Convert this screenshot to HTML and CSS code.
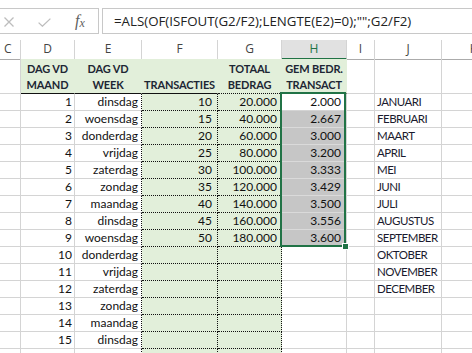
FILE: index.html
```html
<!DOCTYPE html>
<html>
<head>
    <title>Transacties per dag</title>
    <link rel="stylesheet" href="styles.css">
</head>
<body>
    <div class="formula-bar">
        <div class="fb-tools">
            <svg class="fb-cancel" width="10" height="10" viewBox="0 0 10 10">
                <path d="M0.5 0.5 L9.5 9.5 M9.5 0.5 L0.5 9.5" stroke="#bdbdbd" stroke-width="1.3" fill="none"/>
            </svg>
            <svg class="fb-enter" width="13" height="9" viewBox="0 0 13 9">
                <path d="M0.6 4.6 L4.4 8.2 L12.4 0.6" stroke="#bdbdbd" stroke-width="1.3" fill="none"/>
            </svg>
            <span class="fb-fx">f<span class="fx-x">x</span></span>
        </div>
        <div class="fb-input">=ALS(OF(ISFOUT(G2/F2);LENGTE(E2)=0);"";G2/F2)</div>
    </div>

    <div class="sheet">
        <div class="col-heads">
            <div class="col-head col-c">C</div>
            <div class="col-head">D</div>
            <div class="col-head">E</div>
            <div class="col-head">F</div>
            <div class="col-head">G</div>
            <div class="col-head selected">H</div>
            <div class="col-head">I</div>
            <div class="col-head">J</div>
            <div class="col-head">K</div>
        </div>

        <div class="row head-row">
            <div class="cell"></div>
            <div class="cell hd">DAG VD<br>MAAND</div>
            <div class="cell hd">DAG VD<br>WEEK</div>
            <div class="cell hd">TRANSACTIES</div>
            <div class="cell hd hd-dot">TOTAAL<br>BEDRAG</div>
            <div class="cell hd">GEM BEDR.<br>TRANSACT</div>
            <div class="cell"></div>
            <div class="cell"></div>
            <div class="cell"></div>
        </div>

        <div class="row">
            <div class="cell"></div><div class="cell day-nr">1</div><div class="cell weekday">dinsdag</div>
            <div class="cell count">10</div><div class="cell amount">20.000</div><div class="cell avg active">2.000</div>
            <div class="cell"></div><div class="cell month">JANUARI</div><div class="cell"></div>
        </div>
        <div class="row">
            <div class="cell"></div><div class="cell day-nr">2</div><div class="cell weekday">woensdag</div>
            <div class="cell count">15</div><div class="cell amount">40.000</div><div class="cell avg picked">2.667</div>
            <div class="cell"></div><div class="cell month">FEBRUARI</div><div class="cell"></div>
        </div>
        <div class="row">
            <div class="cell"></div><div class="cell day-nr">3</div><div class="cell weekday">donderdag</div>
            <div class="cell count">20</div><div class="cell amount">60.000</div><div class="cell avg picked">3.000</div>
            <div class="cell"></div><div class="cell month">MAART</div><div class="cell"></div>
        </div>
        <div class="row">
            <div class="cell"></div><div class="cell day-nr">4</div><div class="cell weekday">vrijdag</div>
            <div class="cell count">25</div><div class="cell amount">80.000</div><div class="cell avg picked">3.200</div>
            <div class="cell"></div><div class="cell month">APRIL</div><div class="cell"></div>
        </div>
        <div class="row">
            <div class="cell"></div><div class="cell day-nr">5</div><div class="cell weekday">zaterdag</div>
            <div class="cell count">30</div><div class="cell amount">100.000</div><div class="cell avg picked">3.333</div>
            <div class="cell"></div><div class="cell month">MEI</div><div class="cell"></div>
        </div>
        <div class="row">
            <div class="cell"></div><div class="cell day-nr">6</div><div class="cell weekday">zondag</div>
            <div class="cell count">35</div><div class="cell amount">120.000</div><div class="cell avg picked">3.429</div>
            <div class="cell"></div><div class="cell month">JUNI</div><div class="cell"></div>
        </div>
        <div class="row">
            <div class="cell"></div><div class="cell day-nr">7</div><div class="cell weekday">maandag</div>
            <div class="cell count">40</div><div class="cell amount">140.000</div><div class="cell avg picked">3.500</div>
            <div class="cell"></div><div class="cell month">JULI</div><div class="cell"></div>
        </div>
        <div class="row">
            <div class="cell"></div><div class="cell day-nr">8</div><div class="cell weekday">dinsdag</div>
            <div class="cell count">45</div><div class="cell amount">160.000</div><div class="cell avg picked">3.556</div>
            <div class="cell"></div><div class="cell month">AUGUSTUS</div><div class="cell"></div>
        </div>
        <div class="row">
            <div class="cell"></div><div class="cell day-nr">9</div><div class="cell weekday">woensdag</div>
            <div class="cell count">50</div><div class="cell amount">180.000</div><div class="cell avg picked">3.600</div>
            <div class="cell"></div><div class="cell month">SEPTEMBER</div><div class="cell"></div>
        </div>
        <div class="row">
            <div class="cell"></div><div class="cell day-nr">10</div><div class="cell weekday">donderdag</div>
            <div class="cell count"></div><div class="cell amount"></div><div class="cell avg"></div>
            <div class="cell"></div><div class="cell month">OKTOBER</div><div class="cell"></div>
        </div>
        <div class="row">
            <div class="cell"></div><div class="cell day-nr">11</div><div class="cell weekday">vrijdag</div>
            <div class="cell count"></div><div class="cell amount"></div><div class="cell avg"></div>
            <div class="cell"></div><div class="cell month">NOVEMBER</div><div class="cell"></div>
        </div>
        <div class="row">
            <div class="cell"></div><div class="cell day-nr">12</div><div class="cell weekday">zaterdag</div>
            <div class="cell count"></div><div class="cell amount"></div><div class="cell avg"></div>
            <div class="cell"></div><div class="cell month">DECEMBER</div><div class="cell"></div>
        </div>
        <div class="row">
            <div class="cell"></div><div class="cell day-nr">13</div><div class="cell weekday">zondag</div>
            <div class="cell count"></div><div class="cell amount"></div><div class="cell avg"></div>
            <div class="cell"></div><div class="cell month"></div><div class="cell"></div>
        </div>
        <div class="row">
            <div class="cell"></div><div class="cell day-nr">14</div><div class="cell weekday">maandag</div>
            <div class="cell count"></div><div class="cell amount"></div><div class="cell avg"></div>
            <div class="cell"></div><div class="cell month"></div><div class="cell"></div>
        </div>
        <div class="row">
            <div class="cell"></div><div class="cell day-nr">15</div><div class="cell weekday">dinsdag</div>
            <div class="cell count"></div><div class="cell amount"></div><div class="cell avg"></div>
            <div class="cell"></div><div class="cell month"></div><div class="cell"></div>
        </div>
        <div class="row">
            <div class="cell"></div><div class="cell day-nr"></div><div class="cell weekday"></div>
            <div class="cell count"></div><div class="cell amount"></div><div class="cell avg"></div>
            <div class="cell"></div><div class="cell month"></div><div class="cell"></div>
        </div>

        <div class="selection"><div class="fill-handle"></div></div>
    </div>
</body>
</html>
```

FILE: styles.css
```css
body {
    margin: 0;
    padding: 0;
    width: 472px;
    height: 353px;
    overflow: hidden;
    background-color: white;
    font-family: Lato, "Open Sans", sans-serif;
    color: #111;
}
.formula-bar {
    display: flex;
    gap: 3px;
    margin-top: 8px;
    height: 26px;
}
.fb-tools {
    display: flex;
    align-items: center;
    width: 99px;
    box-sizing: border-box;
    border: 1px solid #c8c8c8;
    border-left: none;
}
.fb-cancel {
    margin-left: 4px;
    margin-top: 1px;
}
.fb-enter {
    margin-left: 24px;
    margin-top: 2px;
}
.fb-fx {
    margin-left: 24px;
    font-family: "Liberation Serif", serif;
    font-style: italic;
    font-size: 16px;
    color: #606060;
}
.fx-x {
    font-size: 12px;
    position: relative;
    top: 1px;
}
.fb-input {
    flex: 1;
    box-sizing: border-box;
    border: 1px solid #c8c8c8;
    border-right: none;
    padding-left: 11px;
    line-height: 24px;
    font-family: "Open Sans", sans-serif;
    font-size: 13.3px;
    color: #222;
    white-space: nowrap;
}
.sheet {
    position: relative;
    margin-top: 6px;
}
.col-heads,
.row {
    display: grid;
    grid-template-columns: 21px 54px 67px 76px 64px 65px 28px 67px 64px;
}
.col-heads {
    height: 19px;
}
.col-head {
    box-sizing: border-box;
    border-right: 1px solid #d4d4d4;
    border-bottom: 1px solid #ababab;
    text-align: center;
    font-family: "Open Sans", sans-serif;
    font-size: 12px;
    line-height: 18px;
    color: #444;
}
.col-head.col-c {
    text-align: left;
    padding-left: 4px;
}
.col-head.selected {
    background-color: #e1e1e1;
    color: #217346;
    border-bottom: 2px solid #217346;
}
.row {
    height: 17px;
}
.cell {
    box-sizing: border-box;
    border-right: 1px solid #d4d4d4;
    border-bottom: 1px solid #d4d4d4;
    padding: 0 2px;
    font-size: 12px;
    line-height: 16px;
    white-space: nowrap;
    overflow: hidden;
}
.head-row {
    height: 35px;
}
.hd {
    display: flex;
    flex-direction: column;
    justify-content: flex-end;
    align-items: center;
    text-align: center;
    background-color: #e2efda;
    border-right-color: #e2efda;
    border-bottom: 1px solid #111;
    font-weight: bold;
    font-size: 11px;
    letter-spacing: -0.15px;
    color: #1d2634;
}
.hd-dot {
    border-bottom: 1px dotted #111;
}
.day-nr,
.weekday,
.count,
.amount,
.avg {
    text-align: right;
}
.day-nr {
    padding-right: 2px;
}
.weekday {
    padding-right: 3px;
    border-right: 1px dotted #111;
}
.count,
.amount {
    background-color: #e2efda;
    border-right: 1px dotted #111;
    border-bottom: 1px dotted #111;
    padding-right: 5px;
}
.amount {
    padding-right: 4px;
}
.avg {
    padding-right: 5px;
}
.avg.picked {
    background-color: #c6c6c6;
    border-bottom-color: #dadada;
}
.month {
    padding-left: 2px;
    font-size: 11.5px;
    letter-spacing: -0.5px;
    color: #1a1a2e;
}
.selection {
    position: absolute;
    left: 280px;
    top: 52px;
    width: 66px;
    height: 155px;
    box-sizing: border-box;
    border: 2px solid #217346;
}
.fill-handle {
    position: absolute;
    right: -4px;
    bottom: -4px;
    width: 5px;
    height: 5px;
    background-color: #217346;
    box-shadow: 0 0 0 1px white;
}
```
